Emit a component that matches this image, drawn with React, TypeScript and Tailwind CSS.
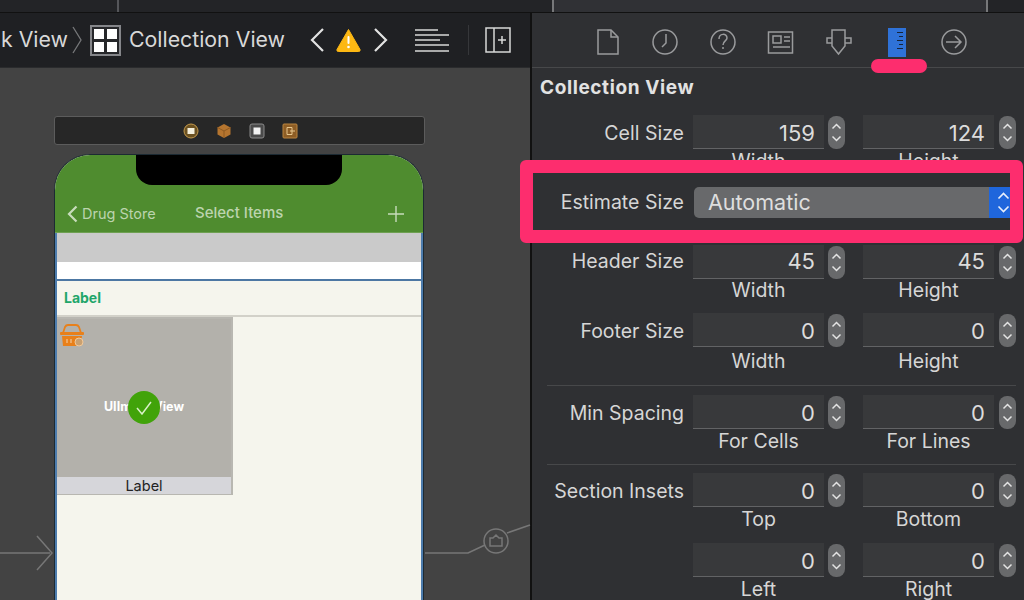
const font = "font-['Inter','Liberation_Sans',sans-serif]";

function Stepper() {
  return (
    <div className="w-[17px] h-[33px] rounded-[8px] bg-[#68696b] flex flex-col items-center justify-center gap-[5px] shrink-0">
      <svg width="11" height="7" viewBox="0 0 11 7" fill="none" stroke="#e4e4e4" strokeWidth="1.5">
        <path d="M1.500 5.500 5.500 1.500 9.500 5.500" />
      </svg>
      <svg width="11" height="7" viewBox="0 0 11 7" fill="none" stroke="#e4e4e4" strokeWidth="1.5">
        <path d="M1.500 1.500 5.500 5.500 9.500 1.500" />
      </svg>
    </div>
  );
}

function Field({ value, nudge }: { value: string; nudge: string }) {
  return (
    <div className={`w-[131px] h-[34px] bg-[#38393b] border-b border-[#626365] flex items-center justify-end pr-[9px] text-[22px] text-[#dcdcdc] shrink-0 ${nudge}`}>
      {value}
    </div>
  );
}

function FieldRow({
  label,
  a,
  b,
  capA,
  capB,
  className,
  nudge = "pt-[3px]",
  capClass = "mt-[2px]",
}: {
  label?: string;
  a: string;
  b: string;
  capA: string;
  capB: string;
  className?: string;
  nudge?: string;
  capClass?: string;
}) {
  return (
    <div className={className}>
      <div className="flex items-center">
        <div className={`w-[152px] text-right text-[19.500px] text-[#d6d6d6] shrink-0 ${nudge}`}>{label}</div>
        <div className="ml-[9px]">
          <Field value={a} nudge={nudge} />
        </div>
        <div className="ml-[4px]">
          <Stepper />
        </div>
        <div className="ml-[18px]">
          <Field value={b} nudge={nudge} />
        </div>
        <div className="ml-[5px]">
          <Stepper />
        </div>
      </div>
      <div className={`flex text-[19.500px] leading-[20px] text-[#d6d6d6] ${capClass}`}>
        <div className="ml-[161px] w-[131px] text-center">{capA}</div>
        <div className="ml-[39px] w-[131px] text-center">{capB}</div>
      </div>
    </div>
  );
}

function TabIcons() {
  const c = "#9a9b9d";
  return (
    <div className="h-[55px] border-b border-[#47484a] relative flex items-center">
      <svg width="492" height="55" viewBox="0 0 492 55" fill="none" stroke={c} strokeWidth="1.5">
        {/* file */}
        <path d="M66 17h13l7 7v17H66z" />
        <path d="M79 17v7h7" />
        {/* clock */}
        <circle cx="133" cy="29" r="12" />
        <path d="M134 21v9l-4 4" />
        {/* help */}
        <circle cx="191" cy="29" r="12" />
        <path d="M187 26c0-6 8-6 8-1 0 3-4 3-4 7" />
        <path d="M191 34v2" />
        {/* identity card */}
        <rect x="236.500" y="19" width="24" height="21" />
        <rect x="241" y="23" width="8" height="7" />
        <path d="M252 24h6M252 28h6M241 34h17" />
        {/* attributes */}
        <path d="M300 17h13v16l-6.500 8-6.500-8z" />
        <path d="M300 25h-5v5h5M313 25h6v5h-6" />
        {/* arrow */}
        <circle cx="422" cy="29" r="12" />
        <path d="M414 29h15M423 23l6 6-6 6" />
      </svg>
      <div className="absolute left-[356px] top-[15px] w-[18px] h-[29px] bg-[#2f72d8] flex flex-col items-end gap-[3px] pt-[4px] pr-[3px]">
        <div className="w-[6px] h-[1px] bg-[#16243a]" />
        <div className="w-[4px] h-[1px] bg-[#16243a]" />
        <div className="w-[6px] h-[1px] bg-[#16243a]" />
        <div className="w-[4px] h-[1px] bg-[#16243a]" />
        <div className="w-[6px] h-[1px] bg-[#16243a]" />
      </div>
    </div>
  );
}

function Toolbar() {
  return (
    <div className="h-[55px] bg-[#1f2023] flex items-center text-[21.300px] text-[#d8d8d8] shrink-0 border-b border-[#2a2b2d] overflow-hidden">
      <span className="w-[68px] shrink-0 whitespace-nowrap flex justify-end">k View</span>
      <svg className="ml-[4px] shrink-0" width="11" height="28" viewBox="0 0 11 28" fill="none" stroke="#77787a" strokeWidth="1.300">
        <path d="M1 1l8 13-8 13" />
      </svg>
      <div className="ml-[7px] w-[31px] h-[31px] border-2 border-[#85868a] bg-[#26272a] grid grid-cols-2 gap-[3px] p-[2px] shrink-0">
        <div className="bg-white" />
        <div className="bg-white" />
        <div className="bg-white" />
        <div className="bg-white" />
      </div>
      <span className="ml-[8px] w-[158px] shrink-0 whitespace-nowrap">Collection View</span>
      <svg className="ml-[22px] shrink-0" width="16" height="26" viewBox="0 0 16 26" fill="none" stroke="#e2e2e2" strokeWidth="2.200">
        <path d="M14 2 3 13l11 11" />
      </svg>
      <svg className="ml-[11px] shrink-0" width="25" height="24" viewBox="0 0 25 24">
        <path d="M12.500 1.500 24 21.500a1.500 1.500 0 0 1-1.300 2H2.300a1.500 1.500 0 0 1-1.300-2z" fill="#fdb813" stroke="#fdb813" strokeLinejoin="round" />
        <rect x="11.500" y="8" width="2" height="8" rx="1" fill="#fff" />
        <circle cx="12.500" cy="19" r="1.300" fill="#fff" />
      </svg>
      <svg className="ml-[12px] shrink-0" width="16" height="26" viewBox="0 0 16 26" fill="none" stroke="#e2e2e2" strokeWidth="2.200">
        <path d="M2 2l11 11L2 24" />
      </svg>
      <svg className="ml-[25px] shrink-0" width="36" height="26" viewBox="0 0 36 26" fill="none" stroke="#d8d8d8" strokeWidth="1.300">
        <path d="M1 3h23M1 8h34M1 13h25M1 18h34M1 24h34" />
      </svg>
      <div className="ml-[18px] w-[1px] h-[30px] bg-[#36373a] shrink-0" />
      <svg className="ml-[16px] shrink-0" width="26" height="26" viewBox="0 0 26 26" fill="none" stroke="#d8d8d8" strokeWidth="1.500">
        <rect x="1" y="1" width="24" height="24" />
        <path d="M9 1v24M13 13h8M17 9v8" />
      </svg>
    </div>
  );
}

function SceneDock() {
  return (
    <div className="absolute left-[54px] top-[48px] w-[371px] h-[29px] bg-[#272727] border border-[#5c5c5c] rounded-[3px] flex items-center justify-center gap-[17px] pl-[1px]">
      <svg width="16" height="16" viewBox="0 0 16 16">
        <circle cx="8" cy="8" r="7" fill="#6b5121" stroke="#c59a4c" />
        <rect x="4.500" y="5" width="7" height="6" fill="#f4efdd" />
      </svg>
      <svg width="16" height="16" viewBox="0 0 16 16">
        <path d="M8 1l6.500 3.500v7L8 15l-6.500-3.500v-7z" fill="#b5752f" />
        <path d="M1.500 4.500 8 8l6.500-3.500M8 8v7" stroke="#8f5a21" fill="none" />
      </svg>
      <svg width="16" height="16" viewBox="0 0 16 16">
        <rect x="1" y="1" width="14" height="14" rx="2" fill="#4a4a4a" stroke="#8a8a8a" />
        <rect x="4.500" y="4.500" width="7" height="7" fill="#f2f2f2" />
      </svg>
      <svg width="16" height="16" viewBox="0 0 16 16" fill="none">
        <rect x="1" y="1" width="14" height="14" rx="1" fill="#8d5d25" stroke="#bb853f" />
        <path d="M5 4.500h5v7H5z" stroke="#e8c78e" />
        <path d="M8 8h5" stroke="#e8c78e" />
      </svg>
    </div>
  );
}

function Phone() {
  return (
    <div className="absolute left-[54px] top-[86px] w-[370px] h-[480px] bg-[#f5f5ed] rounded-t-[36px] overflow-hidden border-x border-t border-[#1c2a33]">
      <div className="h-[78px] bg-[#4f8c2f] relative border-b border-[#6ea052] text-[#bcd4ae]">
        <div className="absolute left-[81px] top-0 w-[206px] h-[30px] bg-black rounded-b-[16px]" />
        <div className="absolute inset-x-0 bottom-0 h-[38px] pt-[1px] flex items-center">
          <svg className="ml-[11px]" width="12" height="18" viewBox="0 0 12 18" fill="none" stroke="#c8dcbc" strokeWidth="2.200">
            <path d="M10.500 1.500 3 9l7.500 7.500" />
          </svg>
          <span className="ml-[4px] w-[114px] shrink-0 text-[14.500px]">Drug Store</span>
          <span className="w-[88px] shrink-0 text-[15px] font-medium whitespace-nowrap text-center -ml-[1px]">Select Items</span>
          <svg className="ml-[105px]" width="16" height="16" viewBox="0 0 16 16" fill="none" stroke="#c8dcbc" strokeWidth="1.400">
            <path d="M8 0v16M0 8h16" />
          </svg>
        </div>
      </div>
      <div className="border-x-2 border-[#4d7cad] h-full">
        <div className="h-[29px] bg-[#cacaca]" />
        <div className="h-[17px] bg-white" />
        <div className="h-[2px] bg-[#4c77a3]" />
        <div className="h-[36px] flex items-center border-b-2 border-[#d2d1c9] pl-[7px] pb-[2px] text-[14px] font-bold text-[#1fa66a]">
          Label
        </div>
        <div className="w-[176px] h-[178px] border-2 border-l-0 border-[#b8b7b1] flex flex-col">
          <div className="relative h-[158px] shrink-0 bg-[#b3b1ab] flex items-center justify-center">
            <span className="text-[12.500px] font-bold text-white whitespace-nowrap mt-[18px]">UIImageView</span>
            <div className="absolute left-[71px] top-[72px] w-[32px] h-[33px] rounded-full bg-[#41a30a] flex items-center justify-center">
              <svg width="16" height="14" viewBox="0 0 16 14" fill="none" stroke="#d9f0c8" strokeWidth="1.500">
                <path d="M1 7l5 6L15 1" />
              </svg>
            </div>
            <svg className="absolute left-[2px] top-[4px]" width="26" height="25" viewBox="0 0 26 25">
              <path d="M4 10 6 4q1-2 3-2h8q2 0 3 2l2 6" fill="none" stroke="#e8801a" strokeWidth="1.800" />
              <rect x="1" y="9" width="24" height="3" rx="1" fill="#e8801a" />
              <path d="M3 13h20l-1 10H4z" fill="#e8801a" />
              <circle cx="20" cy="19" r="4" fill="#c9a070" stroke="#f2c999" />
              <path d="M8 16v4M12 16v4" stroke="#f4d4b0" />
            </svg>
          </div>
          <div className="flex-1 bg-[#d6d6da] text-[14.500px] leading-[17px] text-[#222] text-center">Label</div>
        </div>
      </div>
    </div>
  );
}

function Canvas() {
  return (
    <div className="relative flex-1 bg-[#434343]">
      <SceneDock />
      <Phone />
      {/* segue lines */}
      <svg className="absolute left-0 top-0" width="531" height="532" viewBox="0 0 531 532" fill="none" stroke="#777" strokeWidth="1.500">
        <path d="M0 485h50M37 468l15 17-15 17" />
        <path d="M425 485h43l17-8M507 465l23-8" />
        <circle cx="496" cy="473" r="12" />
        <path d="M490 478v-8h3l3-3 3 3h3v8z" />
      </svg>
    </div>
  );
}

export default function App() {
  return (
    <div className={`relative w-[1024px] h-[600px] overflow-hidden flex flex-col bg-[#111] ${font}`}>
      <div className="h-[13px] flex bg-[#232427] border-b border-[#111] shrink-0">
        <div className="w-[119px] border-r-2 border-[#55565a]" />
        <div className="w-[435px] border-r-2 border-[#77787a]" />
        <div className="w-[434px] bg-[#303135] border-r-2 border-[#77787a]" />
      </div>
      <div className="flex flex-1 min-h-0">
        <div className="w-[530px] flex flex-col shrink-0">
          <Toolbar />
          <Canvas />
        </div>
        <div className="w-[492px] ml-[2px] bg-[#2f3033] overflow-hidden">
          <TabIcons />
          <div className="text-[19px] tracking-[0.6px] font-bold text-[#e2e2e2] ml-[8px] mt-[9px] leading-[22px] whitespace-nowrap">Collection View</div>
          <FieldRow className="mt-[16px]" label="Cell Size" a="159" b="124" capA="Width" capB="Height" />
          <FieldRow className="mt-[74px]" label="Header Size" a="45" b="45" capA="Width" capB="Height" nudge="pt-0" capClass="mt-[1px]" />
          <FieldRow className="mt-[13px]" label="Footer Size" a="0" b="0" capA="Width" capB="Height" capClass="mt-[4px]" />
          <div className="ml-[15px] mr-[8px] mt-[14px] h-[1px] bg-[#47484a]" />
          <FieldRow className="mt-[9px]" label="Min Spacing" a="0" b="0" capA="For Cells" capB="For Lines" />
          <div className="ml-[15px] mr-[8px] mt-[13px] h-[1px] bg-[#47484a]" />
          <FieldRow className="mt-[8px]" label="Section Insets" a="0" b="0" capA="Top" capB="Bottom" />
          <FieldRow className="mt-[14px]" a="0" b="0" capA="Left" capB="Right" />
        </div>
      </div>

      {/* pink annotation over the inspector */}
      <div className="absolute left-[871px] top-[59px] w-[56px] h-[14px] rounded-full bg-[#fd2d6e]" />
      <div className="absolute left-[520px] top-[160px] w-[503px] h-[83px] rounded-[6px] border-[13px] border-[#fd2d6e] bg-[#2f3033] flex items-center">
        <div className="w-[151px] pt-[2px] text-right text-[19.500px] text-[#d6d6d6] shrink-0 whitespace-nowrap">Estimate Size</div>
        <div className="ml-[10px] mt-[2px] flex-1 h-[31px] rounded-l-[5px] bg-[#68696b] flex items-center justify-between pl-[14px] text-[21.500px] text-[#dedede] overflow-hidden">
          Automatic
          <div className="w-[21px] h-full bg-[#1f66dc] flex flex-col items-start pl-[8px] justify-center gap-[5px] shrink-0">
            <svg className="shrink-0" width="13" height="8" viewBox="0 0 13 8" fill="none" stroke="#e8effc" strokeWidth="1.600">
              <path d="M1.500 6.500 6.500 1.500l5 5" />
            </svg>
            <svg className="shrink-0" width="13" height="8" viewBox="0 0 13 8" fill="none" stroke="#e8effc" strokeWidth="1.600">
              <path d="M1.500 1.500l5 5 5-5" />
            </svg>
          </div>
        </div>
      </div>
    </div>
  );
}
